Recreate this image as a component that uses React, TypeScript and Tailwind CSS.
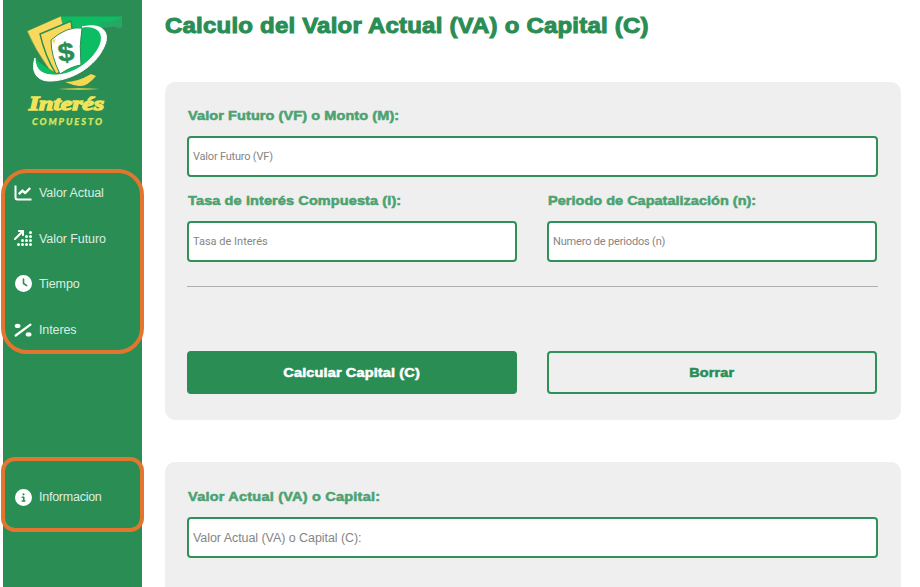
import type { ReactNode } from "react";
import { FaArrowUpRightDots, FaCircleInfo, FaClock } from "react-icons/fa6";

function Logo() {
  return (
    <svg viewBox="0 0 139 140" className="block h-[140px] w-[139px] shrink-0">
      <path d="M58 16.5H119V26Q117 29 113 26Q98 29 95 26L82 27L58 30Z" fill="#0dbd63" />
      <path d="M95 22Q105 24 119 18V27Q116 30 111 27Q103 28 97 25Z" fill="#309f65" opacity=".75" />
      <path d="M62 82Q75 82 88 74L93 76Q84 87 76 86Q69 85 62 82Z" fill="#f5d851" />
      <path d="M55 89Q76 87.3 97 89Q76 90.5 55 89Z" fill="#f5d851" />
      <path d="M76 27C110 22 104 53 84 65C64 82 34 85 32 66L33 60L47 70L76 62Z" fill="#0dbd63" />
      <path d="M24 31L58 16L60 25L42 34L54 74L46 69Q32 50 24 31Z" fill="#f9d85c" stroke="#2a8d54" strokeWidth=".6" />
      <path d="M37 34L68 21L69 29L52 38L61 71L53 74Q42 56 37 34Z" fill="#f9d85c" stroke="#2a8d54" strokeWidth="1.4" />
      <path d="M48 40Q64 26 79 28Q76 46 78 65Q69 66 57 74Q48 56 48 40Z" fill="white" stroke="#2a8d54" strokeWidth="1" />
      <path d="M49 40L53 39L51 44Z" fill="#f9d85c" />
      <path d="M79 27C100 22 108 33 101 47C92 67 69 80 49 81C32 82 28 70 32 58C32 71 41 76 54 75C73 74 91 59 97 45C102 32 93 25 79 27Z" fill="white" stroke="white" strokeWidth="1" />
      <text x="63.5" y="61.2" textAnchor="middle" fontFamily="'Liberation Sans', sans-serif" fontWeight="700" fontSize="26" fill="#2a8d54" stroke="#2a8d54" strokeWidth=".5" transform="rotate(-7 63 53) translate(-8 0) scale(1.12 1)">$</text>
      <text x="26" y="110" textLength="75" lengthAdjust="spacingAndGlyphs" fontFamily="'Liberation Serif', serif" fontWeight="700" fontStyle="italic" fontSize="19" fill="#f1e35b" stroke="#f1e35b" strokeWidth="1.3">Interés</text>
      <text x="29" y="125.2" textLength="70" fontFamily="Lato, sans-serif" fontWeight="900" fontStyle="italic" fontSize="9.3" fill="#d5e55b" stroke="#d5e55b" strokeWidth=".25">COMPUESTO</text>
    </svg>
  );
}

function ChartIcon() {
  return (
    <svg viewBox="0 0 18 16" className="h-4 w-[18px]" fill="none" stroke="white" strokeWidth="2">
      <path d="M1.5 .5V12.5Q1.5 14.4 3.4 14.4H17.5" />
      <path d="M4.8 9.2L8.5 5.6L11.2 8L16.2 3" strokeWidth="2.4" strokeLinejoin="round" />
    </svg>
  );
}

function PercentIcon() {
  return (
    <svg viewBox="0 0 18 14" className="h-3.5 w-[18px]" fill="white">
      <path d="M1.7 12.5L16.4 1.7" stroke="white" strokeWidth="2.2" strokeLinecap="round" />
      <ellipse cx="3.6" cy="2.9" rx="2.9" ry="2.1" />
      <ellipse cx="14.6" cy="11.4" rx="2.9" ry="2.1" />
    </svg>
  );
}

function NavItem({ icon, label, labelClass = "" }: { icon: ReactNode; label: string; labelClass?: string }) {
  return (
    <a className="flex h-[45.6px] items-center gap-[7px] pl-[11px] text-[12.5px] text-[#dceee3]">
      <span className="flex w-[18px] justify-center text-white">{icon}</span>
      <span className={`pt-px ${labelClass}`}>{label}</span>
    </a>
  );
}

function Field({ label, labelClass, placeholder, inputClass }: { label: string; labelClass: string; placeholder: string; inputClass: string }) {
  return (
    <label className="block">
      <span className={`block h-[22px] w-fit origin-left scale-x-[1.09] whitespace-nowrap pl-px text-[13.3px] leading-[23px] font-bold text-[#4ca270] [-webkit-text-stroke:0.55px_#4ca270] ${labelClass}`}>{label}</span>
      <input
        placeholder={placeholder}
        className={`mt-[10px] block h-[41px] w-full rounded-[4px] border-2 border-[#2f905a] bg-white px-1 text-[#757575] placeholder:text-[#858585] ${inputClass}`}
      />
    </label>
  );
}

export default function App() {
  return (
    <div className="relative flex h-[587px] w-[920px] overflow-hidden bg-white pl-[3px] font-['Liberation_Sans',Arial,sans-serif]">
      <aside className="flex w-[139px] shrink-0 flex-col bg-[#2a8d54]">
        <Logo />
        <nav className="mt-[30px]">
          <NavItem icon={<ChartIcon />} label="Valor Actual" labelClass="tracking-[-0.08px]" />
          <NavItem icon={<FaArrowUpRightDots size={18} />} label="Valor Futuro" labelClass="tracking-[-0.08px]" />
          <NavItem icon={<FaClock size={17} />} label="Tiempo" labelClass="tracking-[-0.1px]" />
          <NavItem icon={<PercentIcon />} label="Interes" labelClass="tracking-[-0.1px]" />
        </nav>
        <nav className="mt-[122px]">
          <NavItem icon={<FaCircleInfo size={17} />} label="Informacion" labelClass="tracking-[-0.25px]" />
        </nav>
      </aside>

      <main className="flex flex-1 flex-col pr-[19px] pl-[23px]">
        <h1 className="h-[82px] w-fit shrink-0 origin-left scale-x-[1.09] pt-[10.5px] text-[22px] leading-[30px] font-bold tracking-[0.2px] whitespace-nowrap text-[#2a8d54] [-webkit-text-stroke:1px_#2a8d54]">
          Calculo del Valor Actual (VA) o Capital (C)
        </h1>
        <section className="h-[338px] shrink-0 rounded-[10px] bg-[#efefef] pt-[22px] pr-[23px] pl-[22px]">
          <Field label="Valor Futuro (VF) o Monto (M):" labelClass="tracking-[0.08px]" placeholder="Valor Futuro (VF)" inputClass="font-[Roboto,sans-serif] text-[11px] tracking-[-0.2px]" />
          <div className="mt-[12px] grid grid-cols-[330px_330px] gap-[30px]">
            <Field label="Tasa de interés Compuesta (i):" labelClass="tracking-[0.1px]" placeholder="Tasa de Interés" inputClass="font-[Roboto,sans-serif] text-[11px]" />
            <Field label="Periodo de Capatalización (n):" labelClass="tracking-[0.01px]" placeholder="Numero de periodos (n)" inputClass="font-[Roboto,sans-serif] text-[11px] tracking-[-0.17px]" />
          </div>
          <hr className="mt-6 border-[#aeaeae]" />
          <div className="mt-16 grid grid-cols-[330px_330px] gap-[30px] text-[13.3px] font-bold tracking-[0.13px]">
            <button className="h-[43px] rounded-[4px] bg-[#2a8d54] text-white [-webkit-text-stroke:0.55px_white]">
              <span className="inline-block scale-x-[1.09]">Calcular Capital (C)</span>
            </button>
            <button className="h-[43px] rounded-[4px] border-2 border-[#2f905a] text-[#2a8d54] [-webkit-text-stroke:0.55px_#2a8d54]">
              <span className="inline-block scale-x-[1.09]">Borrar</span>
            </button>
          </div>
        </section>
        <section className="mt-[42px] h-[180px] shrink-0 rounded-[10px] bg-[#efefef] pt-[23px] pr-[23px] pl-[22px]">
          <Field label="Valor Actual (VA) o Capital:" labelClass="tracking-[0.2px]" placeholder="Valor Actual (VA) o Capital (C):" inputClass="text-[12.5px] tracking-[-0.06px]" />
        </section>
      </main>

      <div className="pointer-events-none absolute top-[169px] left-[1px] h-[185px] w-[143px] rounded-[26px] border-[4.5px] border-[#e2762f]" />
      <div className="pointer-events-none absolute top-[457px] left-[1px] h-[75px] w-[143px] rounded-[14px] border-[4.5px] border-[#e2762f]" />
    </div>
  );
}
